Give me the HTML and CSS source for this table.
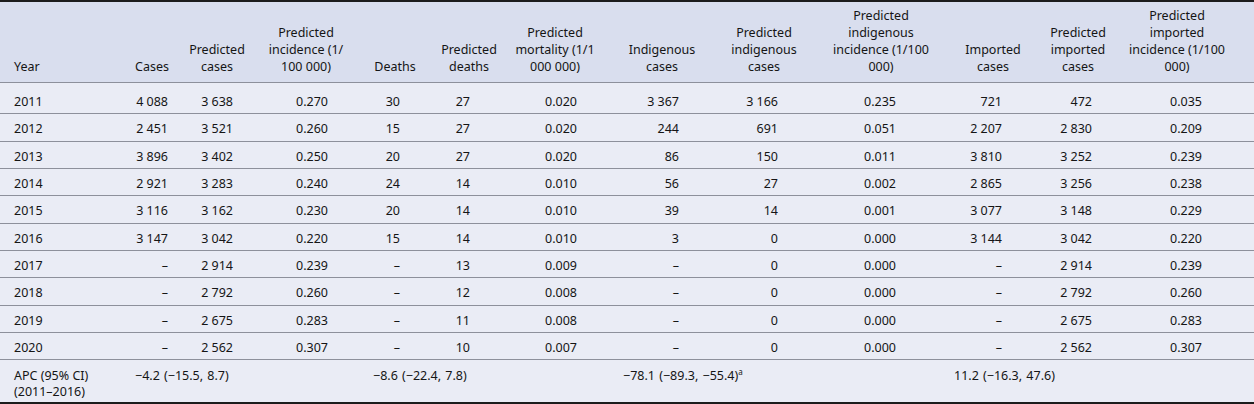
FILE: index.html
```html
<!DOCTYPE html>
<html lang="en">
<head>
<meta charset="utf-8">
<title>Predicted cases table</title>
<link rel="stylesheet" href="styles.css">
</head>
<body>
<table class="data">
  <colgroup>
    <col class="w1"><col class="w2"><col class="w3"><col class="w4"><col class="w5"><col class="w6"><col class="w7"><col class="w8"><col class="w9"><col class="w10"><col class="w11"><col class="w12"><col class="w13">
  </colgroup>
  <thead>
    <tr>
      <th>Year</th>
      <th>Cases</th>
      <th>Predicted<br>cases</th>
      <th>Predicted<br>incidence (1/<br>100 000)</th>
      <th>Deaths</th>
      <th>Predicted<br>deaths</th>
      <th>Predicted<br>mortality (1/1<br>000 000)</th>
      <th>Indigenous<br>cases</th>
      <th>Predicted<br>indigenous<br>cases</th>
      <th>Predicted<br>indigenous<br>incidence (1/100<br>000)</th>
      <th>Imported<br>cases</th>
      <th>Predicted<br>imported<br>cases</th>
      <th>Predicted<br>imported<br>incidence (1/100<br>000)</th>
    </tr>
  </thead>
  <tbody>
    <tr><td>2011</td><td>4 088</td><td>3 638</td><td>0.270</td><td>30</td><td>27</td><td>0.020</td><td>3 367</td><td>3 166</td><td>0.235</td><td>721</td><td>472</td><td>0.035</td></tr>
    <tr><td>2012</td><td>2 451</td><td>3 521</td><td>0.260</td><td>15</td><td>27</td><td>0.020</td><td>244</td><td>691</td><td>0.051</td><td>2 207</td><td>2 830</td><td>0.209</td></tr>
    <tr><td>2013</td><td>3 896</td><td>3 402</td><td>0.250</td><td>20</td><td>27</td><td>0.020</td><td>86</td><td>150</td><td>0.011</td><td>3 810</td><td>3 252</td><td>0.239</td></tr>
    <tr><td>2014</td><td>2 921</td><td>3 283</td><td>0.240</td><td>24</td><td>14</td><td>0.010</td><td>56</td><td>27</td><td>0.002</td><td>2 865</td><td>3 256</td><td>0.238</td></tr>
    <tr><td>2015</td><td>3 116</td><td>3 162</td><td>0.230</td><td>20</td><td>14</td><td>0.010</td><td>39</td><td>14</td><td>0.001</td><td>3 077</td><td>3 148</td><td>0.229</td></tr>
    <tr><td>2016</td><td>3 147</td><td>3 042</td><td>0.220</td><td>15</td><td>14</td><td>0.010</td><td>3</td><td>0</td><td>0.000</td><td>3 144</td><td>3 042</td><td>0.220</td></tr>
    <tr><td>2017</td><td>–</td><td>2 914</td><td>0.239</td><td>–</td><td>13</td><td>0.009</td><td>–</td><td>0</td><td>0.000</td><td>–</td><td>2 914</td><td>0.239</td></tr>
    <tr><td>2018</td><td>–</td><td>2 792</td><td>0.260</td><td>–</td><td>12</td><td>0.008</td><td>–</td><td>0</td><td>0.000</td><td>–</td><td>2 792</td><td>0.260</td></tr>
    <tr><td>2019</td><td>–</td><td>2 675</td><td>0.283</td><td>–</td><td>11</td><td>0.008</td><td>–</td><td>0</td><td>0.000</td><td>–</td><td>2 675</td><td>0.283</td></tr>
    <tr><td>2020</td><td>–</td><td>2 562</td><td>0.307</td><td>–</td><td>10</td><td>0.007</td><td>–</td><td>0</td><td>0.000</td><td>–</td><td>2 562</td><td>0.307</td></tr>
    <tr class="apc">
      <td class="label">APC (95% CI)<br>(2011–2016)</td>
      <td class="span a1" colspan="2">−4.2 (−15.5, 8.7)</td>
      <td class="gap"></td>
      <td class="span a2" colspan="2">−8.6 (−22.4, 7.8)</td>
      <td class="gap"></td>
      <td class="span a3" colspan="2">−78.1 (−89.3, −55.4)<sup class="note">a</sup></td>
      <td class="gap"></td>
      <td class="span a4" colspan="2">11.2 (−16.3, 47.6)</td>
      <td class="gap"></td>
    </tr>
  </tbody>
</table>
</body>
</html>
```

FILE: styles.css
```css
html, body {
  margin: 0;
  padding: 0;
  background: #eaecf5;
}

.data {
  width: 1254px;
  table-layout: fixed;
  border-collapse: separate;
  border-spacing: 0;
  border-top: 2px solid #1c1c1c;
  border-bottom: 2px solid #1c1c1c;
  font-family: "Noto Sans", "Open Sans", sans-serif;
  font-size: 12.5px;
  color: #151515;
  background: #eaecf5;
}

.w1 { width: 110px; }
.w2 { width: 68px; }
.w3 { width: 80px; }
.w4 { width: 102px; }
.w5 { width: 70px; }
.w6 { width: 78px; }
.w7 { width: 98px; }
.w8 { width: 112px; }
.w9 { width: 100px; }
.w10 { width: 128px; }
.w11 { width: 90px; }
.w12 { width: 78px; }
.w13 { width: 140px; }

/* header */
.data thead th {
  background: #d9deee;
  font-weight: normal;
  line-height: 17px;
  padding: 5px 0 7px;
  text-align: center;
  vertical-align: bottom;
  white-space: nowrap;
  border-bottom: 1px solid #8d909b;
}
.data thead th:nth-child(1) { text-align: left; padding-left: 14px; }
.data thead th:nth-child(2) { padding-left: 16px; }
.data thead th:nth-child(3) { padding-right: 2px; }
.data thead th:nth-child(4) { padding-right: 6px; }
.data thead th:nth-child(7) { padding-right: 4px; }
.data thead th:nth-child(9) { padding-right: 8px; }
.data thead th:nth-child(10) { padding-right: 2px; }
.data thead th:nth-child(11) { padding-left: 4px; }
.data thead th:nth-child(12) { padding-left: 6px; }
.data thead th:nth-child(13) { padding-right: 14px; }

/* body */
.data tbody td {
  line-height: 17.33px;
  padding: 6px 0 3px;
  text-align: right;
  white-space: nowrap;
  border-top: 1px solid #8d909b;
}
.data tbody tr:first-child td {
  border-top: none;
  padding-top: 10px;
}
.data tbody td:nth-child(1) { text-align: left; padding-left: 14px; }
.data tbody td:nth-child(2) { padding-right: 10px; }
.data tbody td:nth-child(3) { padding-right: 25px; }
.data tbody td:nth-child(4) { padding-right: 32px; }
.data tbody td:nth-child(5) { padding-right: 30px; }
.data tbody td:nth-child(6) { padding-right: 38px; }
.data tbody td:nth-child(7) { padding-right: 29px; }
.data tbody td:nth-child(8) { padding-right: 39px; }
.data tbody td:nth-child(9) { padding-right: 40px; }
.data tbody td:nth-child(10) { padding-right: 50px; }
.data tbody td:nth-child(11) { padding-right: 34px; }
.data tbody td:nth-child(12) { padding-right: 22px; }
.data tbody td:nth-child(13) { padding-right: 52px; }

/* APC row */
.data tbody tr.apc td {
  line-height: 16px;
  padding: 8px 0 2px;
  vertical-align: top;
  text-align: left;
}
.data tbody tr.apc td.label { padding-left: 14px; }
.data tbody tr.apc td.a1 { padding-left: 25px; word-spacing: 1px; }
.data tbody tr.apc td.a2 { padding-left: 13px; word-spacing: 1px; }
.data tbody tr.apc td.a3 { padding-left: 17px; word-spacing: 1px; }
.data tbody tr.apc td.a4 { padding-left: 8px; word-spacing: 1px; }

.note {
  font-size: 8px;
  line-height: 0;
  vertical-align: 5px;
}
```
